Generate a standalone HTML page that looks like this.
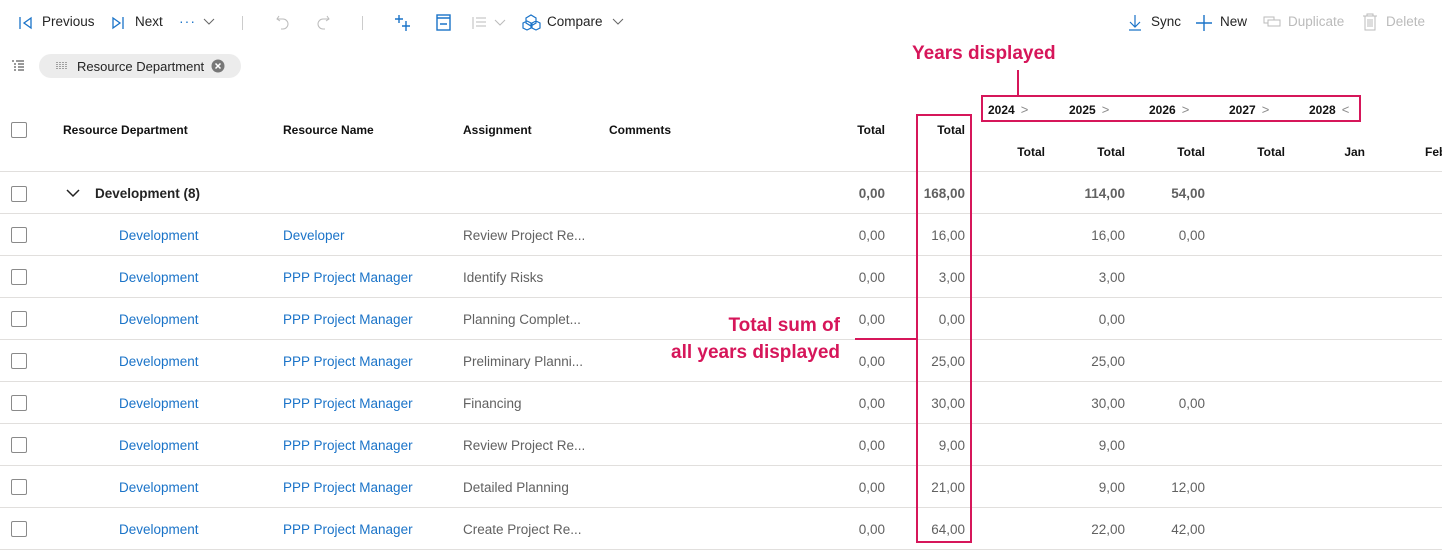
<!DOCTYPE html><html><head><meta charset="utf-8"><style>
body{margin:0;width:1442px;height:557px;background:#fff;font-family:"Liberation Sans",sans-serif;position:relative;overflow:hidden;color:#242424}
.a{position:absolute;white-space:nowrap}
.t{font-size:13.5px;top:14px}
.hd{font-size:12px;font-weight:bold;color:#111}
.cb{position:absolute;left:11px;width:14px;height:14px;border:1.5px solid #8a8a8a;border-radius:2px}
.ln{position:absolute;left:0;width:1442px;height:1px;background:#e1dfdd}
.r{font-size:13.5px}
.lk{color:#1a73c8}
.g{color:#616161}
.num{text-align:right;width:70px}
.red{position:absolute;border:2px solid #d6165a}
.rt{color:#d6165a;font-weight:bold;font-size:19px}
.ch{color:#888;font-weight:normal;font-size:13px;margin-left:6px}
</style></head><body>
<svg class="a" style="left:18px;top:15px" width="16" height="16"><path d="M2 2v12M13 3L6 8l7 5z" stroke="#1a73c8" fill="none" stroke-width="1.3"/></svg>
<div class="a t" style="left:42px">Previous</div>
<svg class="a" style="left:110px;top:15px" width="16" height="16"><path d="M3 3l7 5-7 5zM13 2v12" stroke="#1a73c8" fill="none" stroke-width="1.3"/></svg>
<div class="a t" style="left:135px">Next</div>
<div class="a" style="left:179px;top:13px;color:#1a73c8;font-size:14px;letter-spacing:1px">···</div>
<svg class="a" style="left:203px;top:18px" width="12" height="8"><path d="M1 1l5 5 5-5" stroke="#666" fill="none"/></svg>
<div class="a" style="left:242px;top:16px;width:1px;height:14px;background:#ccc"></div>
<svg class="a" style="left:275px;top:13px" width="16" height="18"><path d="M4 3L2 6l3 2M2 6h6a5 5 0 0 1 0 10H6" stroke="#bbb" fill="none"/></svg>
<svg class="a" style="left:315px;top:13px" width="16" height="18"><path d="M12 3l2 3-3 2M14 6H8a5 5 0 0 0 0 10h2" stroke="#bbb" fill="none"/></svg>
<div class="a" style="left:362px;top:16px;width:1px;height:14px;background:#ccc"></div>
<svg class="a" style="left:395px;top:14px" width="18" height="18"><path d="M4 1v8M0 5h8M11 7v10M7 12h8" stroke="#1a73c8" stroke-width="1.4"/></svg>
<svg class="a" style="left:436px;top:14px" width="16" height="18"><rect x="1" y="1" width="13" height="15" stroke="#1a73c8" fill="none" stroke-width="1.4"/><path d="M1 4h13M4 10h7" stroke="#1a73c8" stroke-width="1.4"/></svg>
<svg class="a" style="left:471px;top:15px" width="40" height="16"><path d="M2 2v12M5 3h10M5 7h10M5 11h10" stroke="#bbb"/><path d="M24 5l5 5 5-5" stroke="#bbb" fill="none"/></svg>
<svg class="a" style="left:522px;top:13px" width="20" height="18"><path d="M4 5l5-3 5 3v5l-5 3-5-3zM1 10l4-2 4 2v5l-4 2-4-2zM10 10l4-2 4 2v5l-4 2-4-2z" stroke="#1a73c8" fill="none" stroke-width="1.2"/></svg>
<div class="a t" style="left:547px">Compare</div>
<svg class="a" style="left:612px;top:18px" width="12" height="8"><path d="M1 1l5 5 5-5" stroke="#666" fill="none"/></svg>
<svg class="a" style="left:1128px;top:14px" width="14" height="18"><path d="M7 1v12M2 8l5 5 5-5M1 16h12" stroke="#1a73c8" fill="none" stroke-width="1.2"/></svg>
<div class="a t" style="left:1151px">Sync</div>
<svg class="a" style="left:1195px;top:14px" width="18" height="18"><path d="M9 1v16M1 9h16" stroke="#1a73c8" stroke-width="1.4"/></svg>
<div class="a t" style="left:1220px">New</div>
<svg class="a" style="left:1263px;top:16px" width="18" height="12"><rect x="1" y="1" width="10" height="6" stroke="#bbb" fill="none"/><rect x="5" y="4" width="12" height="6" stroke="#bbb" fill="#fff"/></svg>
<div class="a t" style="left:1288px;color:#bbb">Duplicate</div>
<svg class="a" style="left:1362px;top:13px" width="16" height="18"><path d="M1 3h14M5 3V1h6v2M3 3v14h10V3M6 6v8M8 6v8M10 6v8" stroke="#bbb" fill="none"/></svg>
<div class="a t" style="left:1386px;color:#bbb">Delete</div>
<svg class="a" style="left:11px;top:60px" width="14" height="12"><path d="M1 1h2M5 1h8M3 4h2M7 4h6M3 7h2M7 7h6M3 10h2M7 10h6" stroke="#333"/></svg>
<div class="a" style="left:39px;top:54px;width:202px;height:24px;border-radius:12px;background:#ececec"></div>
<svg class="a" style="left:56px;top:62px" width="12" height="8"><path d="M1 0v8M4 0v8M7 0v8M10 0v8" stroke="#555" stroke-dasharray="1 1"/></svg>
<div class="a" style="left:77px;top:59px;font-size:13px">Resource Department</div>
<svg class="a" style="left:211px;top:59px" width="14" height="14"><circle cx="7" cy="7" r="6.5" fill="#777"/><path d="M4.5 4.5l5 5M9.5 4.5l-5 5" stroke="#fff" stroke-width="1.5"/></svg>
<div class="cb" style="top:122px"></div>
<div class="a hd" style="left:63px;top:123px">Resource Department</div>
<div class="a hd" style="left:283px;top:123px">Resource Name</div>
<div class="a hd" style="left:463px;top:123px">Assignment</div>
<div class="a hd" style="left:609px;top:123px">Comments</div>
<div class="a hd num" style="left:815px;top:123px">Total</div>
<div class="a hd num" style="left:895px;top:123px">Total</div>
<div class="a hd" style="left:988px;top:102px">2024<span class="ch">&gt;</span></div>
<div class="a hd" style="left:1069px;top:102px">2025<span class="ch">&gt;</span></div>
<div class="a hd" style="left:1149px;top:102px">2026<span class="ch">&gt;</span></div>
<div class="a hd" style="left:1229px;top:102px">2027<span class="ch">&gt;</span></div>
<div class="a hd" style="left:1309px;top:102px">2028<span class="ch">&lt;</span></div>
<div class="a hd num" style="left:975px;top:145px">Total</div>
<div class="a hd num" style="left:1055px;top:145px">Total</div>
<div class="a hd num" style="left:1135px;top:145px">Total</div>
<div class="a hd num" style="left:1215px;top:145px">Total</div>
<div class="a hd num" style="left:1295px;top:145px">Jan</div>
<div class="a hd" style="left:1425px;top:145px">Feb</div>
<div class="ln" style="top:171px"></div>
<div class="cb" style="top:186px"></div>
<svg class="a" style="left:66px;top:189px" width="14" height="9"><path d="M1 1l6 6 6-6" stroke="#222" fill="none" stroke-width="1.5"/></svg>
<div class="a" style="left:95px;top:186px;font-size:13.5px;font-weight:bold">Development (8)</div>
<div class="a r g num" style="left:815px;top:186px;font-weight:bold">0,00</div>
<div class="a r g num" style="left:895px;top:186px;font-weight:bold">168,00</div>
<div class="a r g num" style="left:1055px;top:186px;font-weight:bold">114,00</div>
<div class="a r g num" style="left:1135px;top:186px;font-weight:bold">54,00</div>
<div class="ln" style="top:213px"></div>
<div id="rows"></div>
<script>
var d=[["Developer","Review Project Re...","16,00","16,00","0,00"],["PPP Project Manager","Identify Risks","3,00","3,00",""],["PPP Project Manager","Planning Complet...","0,00","0,00",""],["PPP Project Manager","Preliminary Planni...","25,00","25,00",""],["PPP Project Manager","Financing","30,00","30,00","0,00"],["PPP Project Manager","Review Project Re...","9,00","9,00",""],["PPP Project Manager","Detailed Planning","21,00","9,00","12,00"],["PPP Project Manager","Create Project Re...","64,00","22,00","42,00"]];
var h="";d.forEach(function(r,i){var y=214+42*i,ty=y+14;
h+='<div class="cb" style="top:'+(y+13)+'px"></div><div class="a r lk" style="left:119px;top:'+ty+'px">Development</div><div class="a r lk" style="left:283px;top:'+ty+'px">'+r[0]+'</div><div class="a r g" style="left:463px;top:'+ty+'px">'+r[1]+'</div><div class="a r g num" style="left:815px;top:'+ty+'px">0,00</div><div class="a r g num" style="left:895px;top:'+ty+'px">'+r[2]+'</div><div class="a r g num" style="left:1055px;top:'+ty+'px">'+r[3]+'</div><div class="a r g num" style="left:1135px;top:'+ty+'px">'+r[4]+'</div><div class="ln" style="top:'+(y+41)+'px"></div>';});
document.getElementById("rows").innerHTML=h;
</script>
<div class="red" style="left:916px;top:114px;width:52px;height:425px"></div>
<div class="red" style="left:981px;top:95px;width:376px;height:23px"></div>
<div class="a" style="left:1017px;top:70px;width:2px;height:26px;background:#d6165a"></div>
<div class="a rt" style="left:912px;top:43px">Years displayed</div>
<div class="a rt" style="left:640px;top:312px;width:200px;text-align:right;line-height:27px">Total sum of<br>all years displayed</div>
<div class="a" style="left:855px;top:338px;width:62px;height:2px;background:#d6165a"></div>
</body></html>
